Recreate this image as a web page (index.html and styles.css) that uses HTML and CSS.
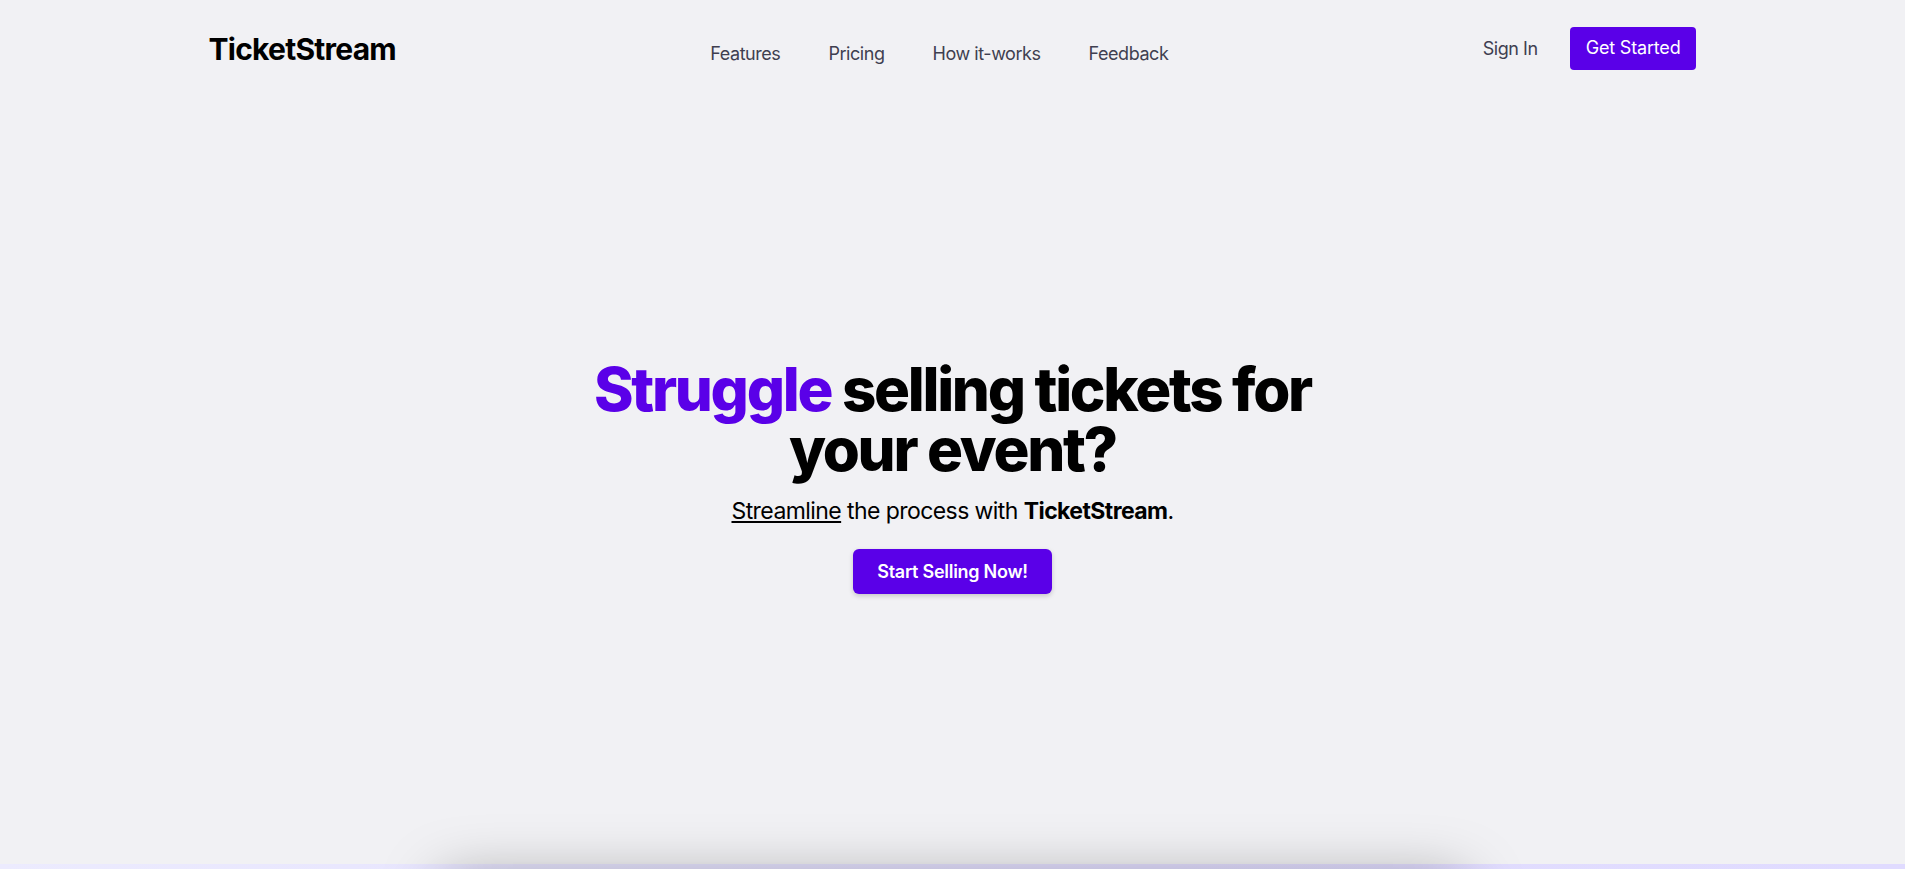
FILE: index.html
```html
<!DOCTYPE html>
<html lang="en">
<head>
<meta charset="utf-8">
<title>TicketStream</title>
<link rel="stylesheet" href="styles.css">
</head>
<body>
<div class="top">
  <header class="header">
    <a class="logo" href="#">TicketStream</a>
    <nav class="nav">
      <a href="#">Features</a>
      <a href="#">Pricing</a>
      <a href="#">How it-works</a>
      <a href="#">Feedback</a>
    </nav>
    <div class="actions">
      <a class="signin" href="#">Sign In</a>
      <a class="btn-start" href="#">Get Started</a>
    </div>
  </header>
  <main class="hero">
    <h1 class="title"><span class="accent">Struggle</span> selling tickets for your event?</h1>
    <p class="subtitle"><span class="ul">Streamline</span> the process with <strong>TicketStream</strong>.</p>
    <a class="cta" href="#">Start Selling Now!</a>
  </main>
</div>
<section class="showcase">
  <div class="shot"></div>
</section>
</body>
</html>
```

FILE: styles.css
```css
* { box-sizing: border-box; }
html, body { margin: 0; padding: 0; }
body {
  font-family: Inter, "Noto Sans", "Liberation Sans", sans-serif;
  color: #000;
  background: #f1f1f4;
}
a { text-decoration: none; color: inherit; }

.top {
  background: #f1f1f4;
  height: 864px;
  display: flex;
  flex-direction: column;
}

.header {
  width: 100%;
  max-width: 1536px;
  margin: 0 auto;
  padding: 27px 24px;
  display: flex;
  justify-content: space-between;
  align-items: center;
}
.logo {
  font-size: 30px;
  line-height: 36px;
  font-weight: 700;
  letter-spacing: -0.025em;
  color: #000;
}
.nav {
  display: flex;
  gap: 48px;
  margin-top: 11px;
}
.nav a, .signin {
  font-size: 18px;
  line-height: 28px;
  letter-spacing: -0.025em;
  color: #3f3f50;
}
.actions {
  display: flex;
  align-items: center;
  gap: 32px;
}
.btn-start {
  background: #5a00e8;
  color: #fff;
  font-size: 18px;
  line-height: 28px;
  letter-spacing: -0.01em;
  padding: 7px 16px 8px;
  border-radius: 4px;
}

.hero {
  flex: 1;
  display: flex;
  flex-direction: column;
  align-items: center;
  justify-content: center;
  text-align: center;
  padding-bottom: 8px;
}
.title {
  margin: 0;
  max-width: 768px;
  font-size: 60px;
  line-height: 60px;
  font-weight: 800;
  letter-spacing: -2.3px;
  color: #000;
}
.accent { color: #5a00e8; }
.subtitle {
  margin: 16px 0 0;
  font-size: 23px;
  line-height: 32px;
  letter-spacing: -0.025em;
  color: #000;
}
.subtitle strong { font-weight: 700; }
.ul {
  text-decoration: underline;
  text-decoration-thickness: 2px;
  text-underline-offset: 2px;
}
.cta {
  margin-top: 22px;
  background: #5a00e8;
  color: #fff;
  font-size: 18px;
  line-height: 28px;
  font-weight: 600;
  letter-spacing: -0.015em;
  padding: 8.5px 24px;
  border-radius: 6px;
  box-shadow: 0 2px 5px rgba(0, 0, 0, 0.18);
}

.showcase {
  background: linear-gradient(90deg, #ecebfe 0%, #e2defe 60%, #e0dbff 100%);
  padding: 16px 24px 80px;
}
.shot {
  max-width: 1024px;
  height: 560px;
  margin: 0 auto;
  background: #fff;
  border-radius: 12px;
  box-shadow: 0 0 60px rgba(0, 0, 0, 0.35);
}
```
